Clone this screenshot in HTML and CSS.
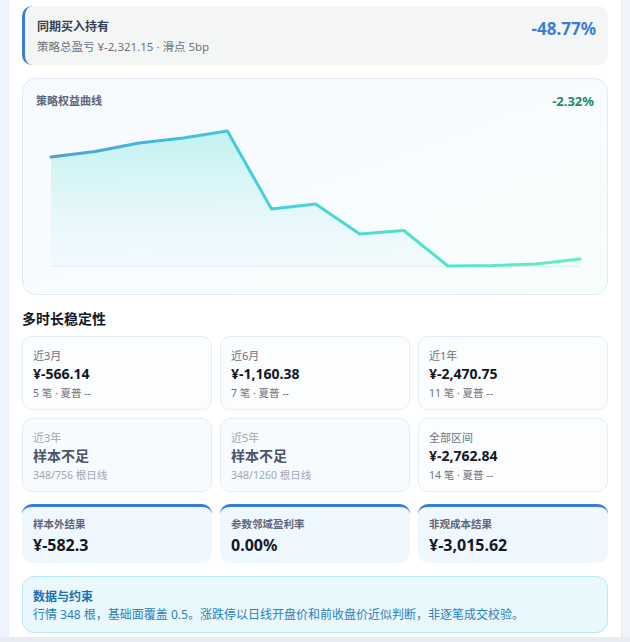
FILE: index.html
```html
<!DOCTYPE html>
<html lang="zh">
<head>
<meta charset="utf-8">
<link rel="stylesheet" href="styles.css">
</head>
<body>
<div class="frame">
  <div class="panel">
    <div class="bench">
      <div class="bench-info">
        <div class="bench-title">同期买入持有</div>
        <div class="bench-sub">策略总盈亏 ¥-2,321.15 · 滑点 5bp</div>
      </div>
      <div class="bench-value">-48.77%</div>
    </div>

    <div class="chart-card">
      <div class="chart-head">
        <span class="chart-title">策略权益曲线</span>
        <span class="chart-ret">-2.32%</span>
      </div>
      <svg class="chart" width="558" height="160" viewBox="0 0 558 160">
        <defs>
          <linearGradient id="lineGrad" x1="0" y1="0" x2="1" y2="0">
            <stop offset="0" stop-color="#4b9ed9"/>
            <stop offset="0.4" stop-color="#42d1de"/>
            <stop offset="1" stop-color="#62f0c2"/>
          </linearGradient>
          <linearGradient id="fillGrad" x1="0" y1="0" x2="0" y2="1">
            <stop offset="0" stop-color="#b3f0ec" stop-opacity="0.8"/>
            <stop offset="1" stop-color="#e3f4fb" stop-opacity="0.25"/>
          </linearGradient>
        </defs>
        <line x1="15" y1="146.5" x2="544" y2="146.5" stroke="#e1eef7" stroke-width="1"/>
        <path d="M15 37 L59.1 31.5 L103.2 23 L147.3 18 L191.4 11 L235.5 89 L279.6 84 L323.7 114 L367.8 110.5 L411.9 146 L456 145.5 L500.1 144 L544.2 139 L544.2 146 L15 146 Z" fill="url(#fillGrad)"/>
        <path d="M15 37 L59.1 31.5 L103.2 23 L147.3 18 L191.4 11 L235.5 89 L279.6 84 L323.7 114 L367.8 110.5 L411.9 146 L456 145.5 L500.1 144 L544.2 139" fill="none" stroke="url(#lineGrad)" stroke-width="3" stroke-linejoin="round" stroke-linecap="round"/>
      </svg>
    </div>

    <h2 class="section-title">多时长稳定性</h2>
    <div class="grid">
      <div class="stat">
        <div class="stat-label">近3月</div>
        <div class="stat-value">¥-566.14</div>
        <div class="stat-sub">5 笔 · 夏普 --</div>
      </div>
      <div class="stat">
        <div class="stat-label">近6月</div>
        <div class="stat-value">¥-1,160.38</div>
        <div class="stat-sub">7 笔 · 夏普 --</div>
      </div>
      <div class="stat">
        <div class="stat-label">近1年</div>
        <div class="stat-value">¥-2,470.75</div>
        <div class="stat-sub">11 笔 · 夏普 --</div>
      </div>
      <div class="stat muted">
        <div class="stat-label">近3年</div>
        <div class="stat-value">样本不足</div>
        <div class="stat-sub">348/756 根日线</div>
      </div>
      <div class="stat muted">
        <div class="stat-label">近5年</div>
        <div class="stat-value">样本不足</div>
        <div class="stat-sub">348/1260 根日线</div>
      </div>
      <div class="stat">
        <div class="stat-label">全部区间</div>
        <div class="stat-value">¥-2,762.84</div>
        <div class="stat-sub">14 笔 · 夏普 --</div>
      </div>
    </div>

    <div class="kpis">
      <div class="kpi">
        <div class="kpi-label">样本外结果</div>
        <div class="kpi-value">¥-582.3</div>
      </div>
      <div class="kpi">
        <div class="kpi-label">参数邻域盈利率</div>
        <div class="kpi-value">0.00%</div>
      </div>
      <div class="kpi">
        <div class="kpi-label">非观成本结果</div>
        <div class="kpi-value">¥-3,015.62</div>
      </div>
    </div>

    <div class="notes">
      <div class="notes-title">数据与约束</div>
      <div class="notes-text">行情 348 根，基础面覆盖 0.5。涨跌停以日线开盘价和前收盘价近似判断，非逐笔成交校验。</div>
    </div>
  </div>
</div>
<div class="bottom-strip"></div>
</body>
</html>
```

FILE: styles.css
```css
* { box-sizing: border-box; }
html, body { margin: 0; padding: 0; }
body {
  background: #eff4fc;
  font-family: "Noto Sans", "Noto Sans CJK SC", sans-serif;
  color: #111827;
  width: 630px;
  height: 642px;
  overflow: hidden;
}
.frame {
  height: 637px;
  padding-left: 8px;
  display: flex;
}
.panel {
  width: 614px;
  height: 637px;
  background: #ffffff;
  border-left: 1px solid #e6eef8;
  border-right: 1px solid #e2eaf4;
  padding: 6px 13px 0 13px;
  overflow: hidden;
}
.bottom-strip {
  height: 5px;
  background: #e7ecf2;
}

/* benchmark card */
.bench {
  display: flex;
  justify-content: space-between;
  align-items: flex-start;
  height: 59px;
  background: #f4f6f6;
  border-left: 3px solid #3b7dd6;
  border-radius: 10px;
  padding: 13px 12px 10px 12px;
}
.bench-title {
  font-size: 12px;
  line-height: 16px;
  font-weight: 700;
  color: #374151;
}
.bench-sub {
  margin-top: 4px;
  font-size: 11.5px;
  line-height: 16px;
  color: #6b7280;
}
.bench-value {
  font-size: 17px;
  line-height: 18px;
  font-weight: 700;
  color: #3b7dd6;
  margin-top: 1px;
}

/* chart card */
.chart-card {
  margin-top: 13px;
  height: 217px;
  border: 1px solid #deebf6;
  border-radius: 14px;
  background: linear-gradient(160deg, #f6faff 0%, #f8fcff 50%, #f6fefb 100%);
  padding: 15px 13px 14px 13px;
}
.chart-head {
  display: flex;
  justify-content: space-between;
  align-items: center;
  height: 14px;
}
.chart-title {
  font-size: 11px;
  line-height: 14px;
  font-weight: 700;
  color: #5d6677;
}
.chart-ret {
  font-size: 13px;
  line-height: 14px;
  font-weight: 700;
  color: #1e8a66;
}
.chart {
  display: block;
  margin-top: 12px;
}

/* section */
.section-title {
  margin: 14px 0 0 0;
  font-size: 14px;
  line-height: 20px;
  font-weight: 700;
  color: #111827;
}
.grid {
  margin-top: 7px;
  display: grid;
  grid-template-columns: repeat(3, 1fr);
  gap: 8px;
}
.stat {
  height: 74px;
  border: 1px solid #e2eef8;
  border-radius: 10px;
  background: #fcfdfe;
  padding: 11px 10px 9px 10px;
}
.stat-label {
  font-size: 11px;
  line-height: 15px;
  color: #6b7280;
}
.stat-value {
  margin-top: 2px;
  font-size: 14px;
  line-height: 18px;
  font-weight: 700;
  color: #111827;
}
.stat-sub {
  margin-top: 3px;
  font-size: 10.5px;
  line-height: 14px;
  color: #6b7280;
}
.stat.muted { background: #f7fbfe; }
.stat.muted .stat-label,
.stat.muted .stat-sub { color: #a0a7b3; }
.stat.muted .stat-value { color: #4b5563; }

/* kpis */
.kpis {
  margin-top: 12px;
  display: grid;
  grid-template-columns: repeat(3, 1fr);
  gap: 8px;
}
.kpi {
  height: 59px;
  background: #eff7ff;
  border-top: 3px solid #3b7dd6;
  border-radius: 10px;
  padding: 10px 11px 8px 11px;
}
.kpi-label {
  font-size: 10.5px;
  line-height: 14px;
  font-weight: 700;
  color: #5d6677;
}
.kpi-value {
  margin-top: 4px;
  font-size: 16px;
  line-height: 20px;
  font-weight: 700;
  color: #111827;
}

/* notes */
.notes {
  margin-top: 13px;
  height: 57px;
  background: #e8f8fd;
  border: 1px solid #b9e9f5;
  border-radius: 12px;
  padding: 12px 10px 8px 10px;
}
.notes-title {
  font-size: 12px;
  line-height: 16px;
  font-weight: 700;
  color: #1b6fb0;
}
.notes-text {
  margin-top: 1px;
  font-size: 12px;
  line-height: 18px;
  color: #2b7fba;
  white-space: nowrap;
}
```
